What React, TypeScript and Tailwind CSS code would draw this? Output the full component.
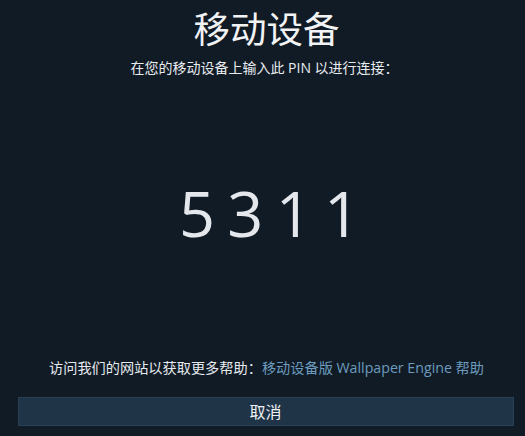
export default function App() {
  const font = "font-['Segoe_UI','Open_Sans','Noto_Sans_CJK_SC',sans-serif]";

  return (
    <div className={`w-[525px] h-[436px] bg-[#111b26] text-[#e6eaee] flex flex-col items-center ${font}`}>
      <h1 className="mt-[7px] ml-[8px] text-[36.5px] leading-[44px] text-[#f1f3f5]">移动设备</h1>
      <p className="mt-[8px] ml-[4px] text-[14px] leading-[17px] text-[#e8ecef]">
        在您的移动设备上输入此 PIN 以进行连接：
      </p>

      <div className="mt-[102px] ml-[12px] text-[63px] leading-[70px] tracking-[-2px] text-[#e4e8ec] whitespace-pre">
        5 3 1 1
      </div>

      <p className="mt-[110px] ml-[8px] text-[14.2px] leading-[20px] text-[#e6eaee]">
        访问我们的网站以获取更多帮助：
        <a className="text-[#6c9bbd]">移动设备版 Wallpaper Engine 帮助</a>
      </p>

      <button className="mt-[19px] w-[496px] h-[29px] ml-[6px] bg-[#1f3447] border border-[#2a4054] text-[16px] leading-[26px] text-[#eef1f4]">
        取消
      </button>
    </div>
  );
}
